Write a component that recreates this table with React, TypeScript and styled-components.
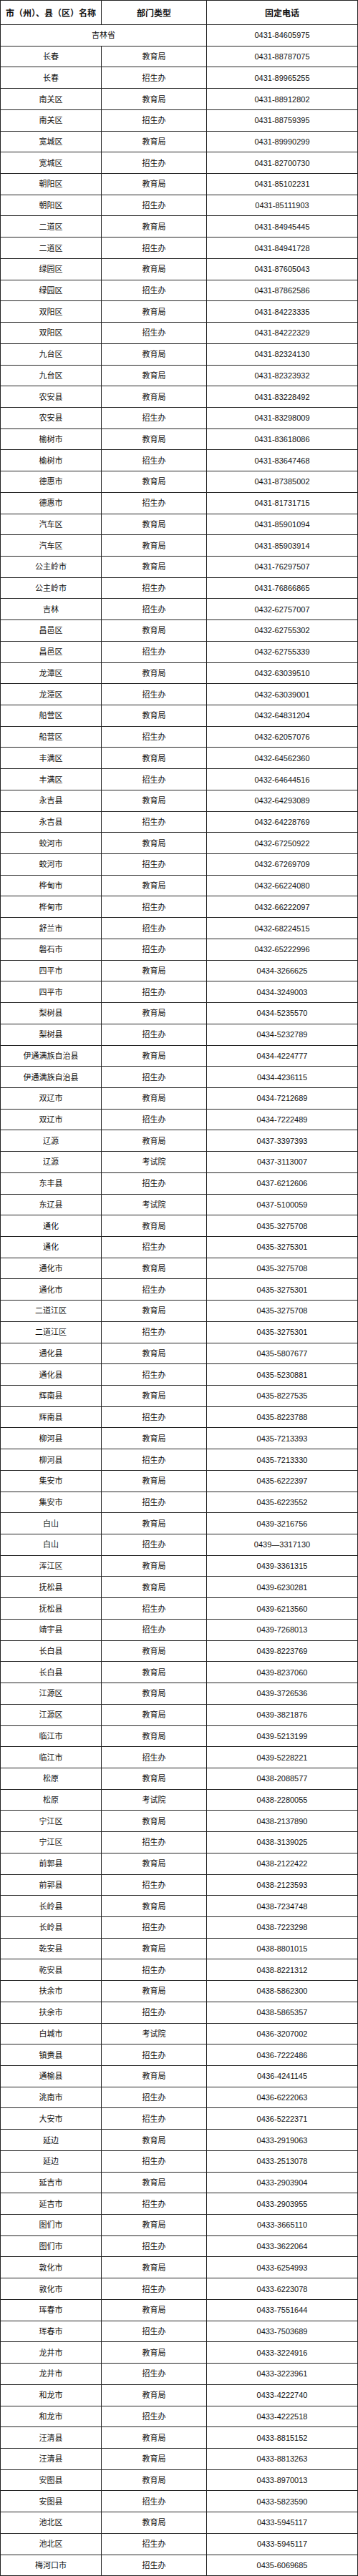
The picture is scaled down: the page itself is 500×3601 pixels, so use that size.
import React from "react";
import styled, { createGlobalStyle } from "styled-components";

const GlobalStyle = createGlobalStyle`
  html, body {
    margin: 0;
    padding: 0;
    background: #fff;
  }
  body {
    font-family: "Liberation Sans", "Noto Sans CJK SC", sans-serif;
  }
`;

const Table = styled.table`
  width: 499px;
  table-layout: fixed;
  border-collapse: collapse;
  font-family: "Liberation Sans", "Noto Sans CJK SC", sans-serif;
  font-size: 11px;
  color: #111;
`;

const HeadCell = styled.th`
  height: 33px;
  padding: 0;
  border: 1px solid #222;
  font-size: 12px;
  font-weight: bold;
  text-align: center;
  vertical-align: middle;
  white-space: nowrap;
`;

const Row = styled.tr`
  height: 29.725px;
`;

const Cell = styled.td`
  padding: 0;
  border: 1px solid #222;
  text-align: center;
  vertical-align: middle;
  white-space: nowrap;
  line-height: 14px;
`;

type Entry = [string, string, string];

const rows: Entry[] = [
  ["长春", "教育局", "0431-88787075"],
  ["长春", "招生办", "0431-89965255"],
  ["南关区", "教育局", "0431-88912802"],
  ["南关区", "招生办", "0431-88759395"],
  ["宽城区", "教育局", "0431-89990299"],
  ["宽城区", "招生办", "0431-82700730"],
  ["朝阳区", "教育局", "0431-85102231"],
  ["朝阳区", "招生办", "0431-85111903"],
  ["二道区", "教育局", "0431-84945445"],
  ["二道区", "招生办", "0431-84941728"],
  ["绿园区", "教育局", "0431-87605043"],
  ["绿园区", "招生办", "0431-87862586"],
  ["双阳区", "教育局", "0431-84223335"],
  ["双阳区", "招生办", "0431-84222329"],
  ["九台区", "教育局", "0431-82324130"],
  ["九台区", "教育局", "0431-82323932"],
  ["农安县", "教育局", "0431-83228492"],
  ["农安县", "招生办", "0431-83298009"],
  ["榆树市", "教育局", "0431-83618086"],
  ["榆树市", "招生办", "0431-83647468"],
  ["德惠市", "教育局", "0431-87385002"],
  ["德惠市", "招生办", "0431-81731715"],
  ["汽车区", "教育局", "0431-85901094"],
  ["汽车区", "教育局", "0431-85903914"],
  ["公主岭市", "教育局", "0431-76297507"],
  ["公主岭市", "招生办", "0431-76866865"],
  ["吉林", "招生办", "0432-62757007"],
  ["昌邑区", "教育局", "0432-62755302"],
  ["昌邑区", "招生办", "0432-62755339"],
  ["龙潭区", "教育局", "0432-63039510"],
  ["龙潭区", "招生办", "0432-63039001"],
  ["船营区", "教育局", "0432-64831204"],
  ["船营区", "招生办", "0432-62057076"],
  ["丰满区", "教育局", "0432-64562360"],
  ["丰满区", "招生办", "0432-64644516"],
  ["永吉县", "教育局", "0432-64293089"],
  ["永吉县", "招生办", "0432-64228769"],
  ["蛟河市", "教育局", "0432-67250922"],
  ["蛟河市", "招生办", "0432-67269709"],
  ["桦甸市", "教育局", "0432-66224080"],
  ["桦甸市", "招生办", "0432-66222097"],
  ["舒兰市", "招生办", "0432-68224515"],
  ["磐石市", "招生办", "0432-65222996"],
  ["四平市", "教育局", "0434-3266625"],
  ["四平市", "招生办", "0434-3249003"],
  ["梨树县", "教育局", "0434-5235570"],
  ["梨树县", "招生办", "0434-5232789"],
  ["伊通满族自治县", "教育局", "0434-4224777"],
  ["伊通满族自治县", "招生办", "0434-4236115"],
  ["双辽市", "教育局", "0434-7212689"],
  ["双辽市", "招生办", "0434-7222489"],
  ["辽源", "教育局", "0437-3397393"],
  ["辽源", "考试院", "0437-3113007"],
  ["东丰县", "招生办", "0437-6212606"],
  ["东辽县", "考试院", "0437-5100059"],
  ["通化", "教育局", "0435-3275708"],
  ["通化", "招生办", "0435-3275301"],
  ["通化市", "教育局", "0435-3275708"],
  ["通化市", "招生办", "0435-3275301"],
  ["二道江区", "教育局", "0435-3275708"],
  ["二道江区", "招生办", "0435-3275301"],
  ["通化县", "教育局", "0435-5807677"],
  ["通化县", "招生办", "0435-5230881"],
  ["辉南县", "教育局", "0435-8227535"],
  ["辉南县", "招生办", "0435-8223788"],
  ["柳河县", "教育局", "0435-7213393"],
  ["柳河县", "招生办", "0435-7213330"],
  ["集安市", "教育局", "0435-6222397"],
  ["集安市", "招生办", "0435-6223552"],
  ["白山", "教育局", "0439-3216756"],
  ["白山", "招生办", "0439—3317130"],
  ["浑江区", "教育局", "0439-3361315"],
  ["抚松县", "教育局", "0439-6230281"],
  ["抚松县", "招生办", "0439-6213560"],
  ["靖宇县", "招生办", "0439-7268013"],
  ["长白县", "教育局", "0439-8223769"],
  ["长白县", "教育局", "0439-8237060"],
  ["江源区", "教育局", "0439-3726536"],
  ["江源区", "教育局", "0439-3821876"],
  ["临江市", "教育局", "0439-5213199"],
  ["临江市", "招生办", "0439-5228221"],
  ["松原", "教育局", "0438-2088577"],
  ["松原", "考试院", "0438-2280055"],
  ["宁江区", "教育局", "0438-2137890"],
  ["宁江区", "招生办", "0438-3139025"],
  ["前郭县", "教育局", "0438-2122422"],
  ["前郭县", "招生办", "0438-2123593"],
  ["长岭县", "教育局", "0438-7234748"],
  ["长岭县", "招生办", "0438-7223298"],
  ["乾安县", "教育局", "0438-8801015"],
  ["乾安县", "招生办", "0438-8221312"],
  ["扶余市", "教育局", "0438-5862300"],
  ["扶余市", "招生办", "0438-5865357"],
  ["白城市", "考试院", "0436-3207002"],
  ["镇赉县", "招生办", "0436-7222486"],
  ["通榆县", "教育局", "0436-4241145"],
  ["洮南市", "招生办", "0436-6222063"],
  ["大安市", "招生办", "0436-5222371"],
  ["延边", "教育局", "0433-2919063"],
  ["延边", "招生办", "0433-2513078"],
  ["延吉市", "教育局", "0433-2903904"],
  ["延吉市", "招生办", "0433-2903955"],
  ["图们市", "教育局", "0433-3665110"],
  ["图们市", "招生办", "0433-3622064"],
  ["敦化市", "教育局", "0433-6254993"],
  ["敦化市", "招生办", "0433-6223078"],
  ["珲春市", "教育局", "0433-7551644"],
  ["珲春市", "招生办", "0433-7503689"],
  ["龙井市", "教育局", "0433-3224916"],
  ["龙井市", "招生办", "0433-3223961"],
  ["和龙市", "教育局", "0433-4222740"],
  ["和龙市", "招生办", "0433-4222518"],
  ["汪清县", "教育局", "0433-8815152"],
  ["汪清县", "教育局", "0433-8813263"],
  ["安图县", "教育局", "0433-8970013"],
  ["安图县", "招生办", "0433-5823590"],
  ["池北区", "教育局", "0433-5945117"],
  ["池北区", "招生办", "0433-5945117"],
  ["梅河口市", "招生办", "0435-6069685"],
];

const App: React.FC = () => {
  return (
    <>
      <GlobalStyle />
      <Table>
        <colgroup>
          <col style={{ width: "141px" }} />
          <col style={{ width: "147px" }} />
          <col style={{ width: "211px" }} />
        </colgroup>
        <thead>
          <tr>
            <HeadCell>市（州）、县（区）名称</HeadCell>
            <HeadCell>部门类型</HeadCell>
            <HeadCell>固定电话</HeadCell>
          </tr>
        </thead>
        <tbody>
          <Row>
            <Cell colSpan={2}>吉林省</Cell>
            <Cell>0431-84605975</Cell>
          </Row>
          {rows.map(([area, dept, phone], i) => (
            <Row key={i}>
              <Cell>{area}</Cell>
              <Cell>{dept}</Cell>
              <Cell>{phone}</Cell>
            </Row>
          ))}
        </tbody>
      </Table>
    </>
  );
};

export default App;
